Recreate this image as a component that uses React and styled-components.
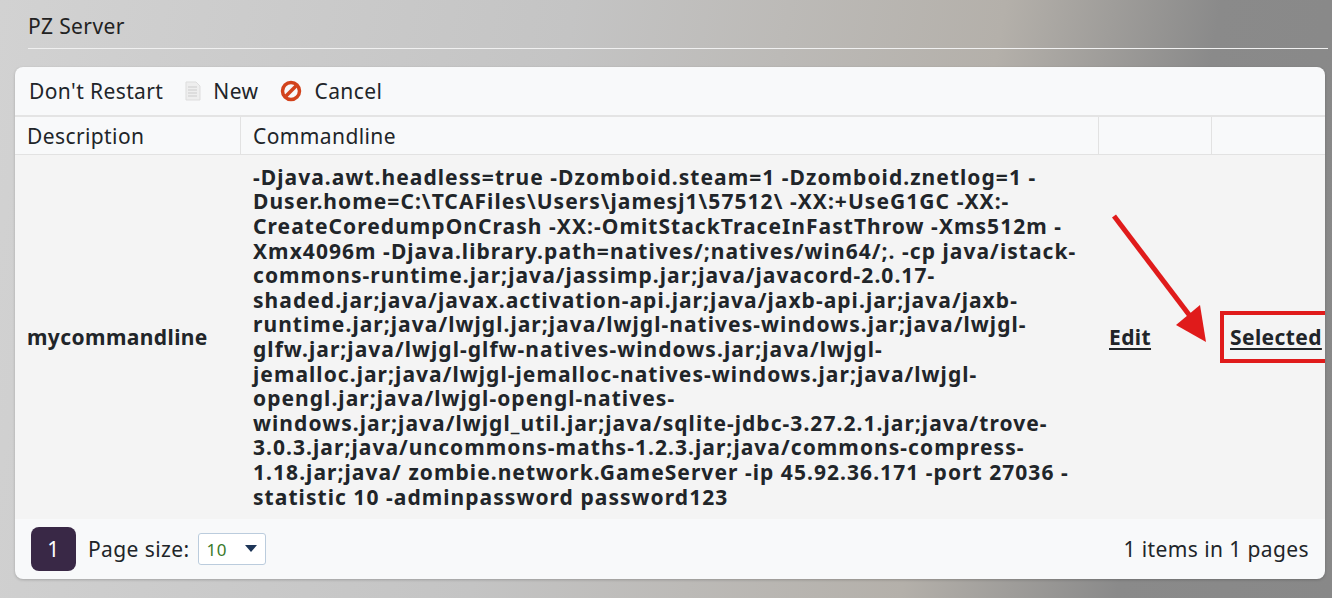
import React from "react";
import styled, { createGlobalStyle } from "styled-components";

const G = createGlobalStyle`
  html,body{margin:0;padding:0;}
  body{width:1332px;height:598px;overflow:hidden;font-family:"Noto Sans","Open Sans",sans-serif;color:#212529;
    background:linear-gradient(100deg,#d2d2d2 0%,#c4c4c4 40%,#b4b0aa 70%,#8a8a8a 85%,#888 100%);}
`;
const Page = styled.div`height:598px;position:relative;display:flex;flex-direction:column;`;
const Title = styled.div`margin:0 4px 0 28px;padding:12px 0 8px;font-size:21px;letter-spacing:.4px;color:#222;border-bottom:1px solid #f0f0f0;`;
const Card = styled.div`margin:18px 7px 0 15px;background:#f8f9fa;border-radius:8px;overflow:hidden;box-shadow:0 1px 3px rgba(0,0,0,.2);`;
const Toolbar = styled.div`height:48px;display:flex;align-items:center;gap:22px;padding:0 14px;font-size:21px;letter-spacing:.4px;border-bottom:2px solid #e4e4e4;`;
const Tool = styled.span`display:flex;align-items:center;gap:12px;`;
const Grid = styled.div`display:grid;grid-template-columns:226px 858px 113px 1fr;`;
const Th = styled.div`height:37px;display:flex;align-items:center;padding:0 12px;font-size:21px;letter-spacing:.4px;border-right:${p=>p.last?"none":"1px solid #e2e2e2"};border-bottom:1px solid #e2e2e2;`;
const Td = styled.div`background:#f4f4f4;display:flex;align-items:center;padding:0 ${p=>p.pad||12}px;font-weight:700;font-size:21px;letter-spacing:.4px;height:364px;justify-content:${p=>p.center?"center":"flex-start"};`;
const Cmd = styled.div`font-size:21px;line-height:24.6px;white-space:nowrap;letter-spacing:1.05px;`;
const Link = styled.a`color:#212529;text-decoration:underline;text-underline-offset:3px;`;
const Boxed = styled(Link)`outline:4px solid #e01b1b;padding:8px 6px;`;
const Footer = styled.div`height:60px;display:flex;align-items:center;padding:0 16px;font-size:21px;letter-spacing:.4px;gap:12px;`;
const PageBtn = styled.span`width:45px;height:44px;background:#392846;color:#fff;border-radius:8px;display:flex;align-items:center;justify-content:center;`;
const Select = styled.span`width:68px;height:32px;border:1px solid #bcd;border-radius:3px;display:flex;align-items:center;justify-content:space-between;padding:0 8px;box-sizing:border-box;color:#3a7a2a;font-size:17px;background:#fff;margin-left:-4px;`;
const Right = styled.span`margin-left:auto;`;
const Arrow = styled.svg`position:absolute;left:0;top:0;pointer-events:none;`;

const lines = [
"-Djava.awt.headless=true -Dzomboid.steam=1 -Dzomboid.znetlog=1 -",
"Duser.home=C:\\TCAFiles\\Users\\jamesj1\\57512\\ -XX:+UseG1GC -XX:-",
"CreateCoredumpOnCrash -XX:-OmitStackTraceInFastThrow -Xms512m -",
"Xmx4096m -Djava.library.path=natives/;natives/win64/;. -cp java/istack-",
"commons-runtime.jar;java/jassimp.jar;java/javacord-2.0.17-",
"shaded.jar;java/javax.activation-api.jar;java/jaxb-api.jar;java/jaxb-",
"runtime.jar;java/lwjgl.jar;java/lwjgl-natives-windows.jar;java/lwjgl-",
"glfw.jar;java/lwjgl-glfw-natives-windows.jar;java/lwjgl-",
"jemalloc.jar;java/lwjgl-jemalloc-natives-windows.jar;java/lwjgl-",
"opengl.jar;java/lwjgl-opengl-natives-",
"windows.jar;java/lwjgl_util.jar;java/sqlite-jdbc-3.27.2.1.jar;java/trove-",
"3.0.3.jar;java/uncommons-maths-1.2.3.jar;java/commons-compress-",
"1.18.jar;java/ zombie.network.GameServer -ip 45.92.36.171 -port 27036 -",
"statistic 10 -adminpassword password123",
];

export default function App(){
  return <Page><G/>
    <Title>PZ Server</Title>
    <Card>
      <Toolbar>
        <span>Don't Restart</span>
        <Tool><svg width="16" height="20" viewBox="0 0 16 20"><path d="M1 1h10l4 4v14H1z" fill="#eee" stroke="#ddd"/><path d="M3 6h9M3 9h9M3 12h9M3 15h9" stroke="#ccc"/></svg>New</Tool>
        <Tool><svg width="22" height="22" viewBox="0 0 22 22"><circle cx="11" cy="11" r="8.5" fill="none" stroke="#d2431c" strokeWidth="3.5"/><path d="M6 16L16 6" stroke="#d2431c" strokeWidth="3.5"/></svg>Cancel</Tool>
      </Toolbar>
      <Grid>
        <Th>Description</Th><Th>Commandline</Th><Th/><Th last/>
        <Td>mycommandline</Td>
        <Td><Cmd>{lines.map((l,i)=><div key={i}>{l}</div>)}</Cmd></Td>
        <Td pad={10}><Link>Edit</Link></Td>
        <Td pad={0} center><Boxed>Selected</Boxed></Td>
      </Grid>
      <Footer>
        <PageBtn>1</PageBtn><span>Page size:</span>
        <Select>10<svg width="12" height="8" viewBox="0 0 12 8"><path d="M0 0h12L6 7z" fill="#1d3557"/></svg></Select>
        <Right>1 items in 1 pages</Right>
      </Footer>
    </Card>
    <Arrow width="1332" height="598"><path d="M1114 216L1190 316" stroke="#e01b1b" strokeWidth="5"/><path d="M1176 325L1206 342L1200 305z" fill="#e01b1b"/></Arrow>
  </Page>;
}
